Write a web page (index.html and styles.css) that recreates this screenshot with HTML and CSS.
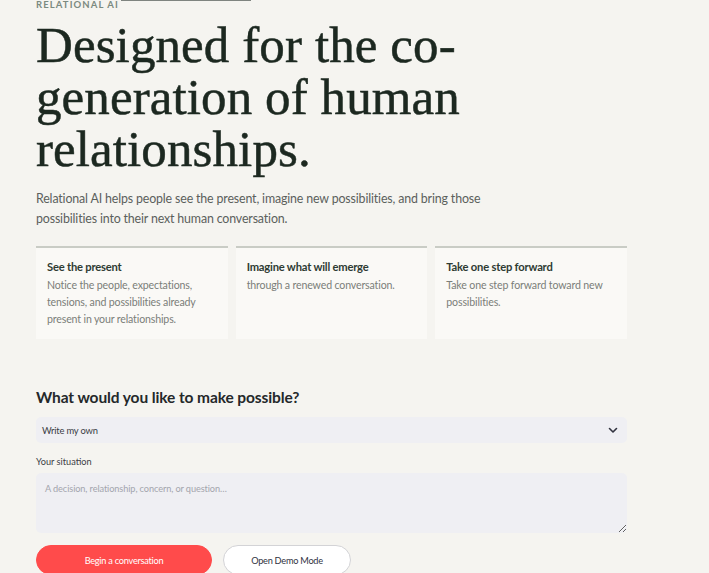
FILE: index.html
```html
<!DOCTYPE html>
<html lang="en">
<head>
<meta charset="utf-8">
<title>Relational AI</title>
<link rel="stylesheet" href="styles.css">
</head>
<body>
<main class="page">
  <div class="eyebrow"><span class="eyebrow-text">RELATIONAL AI</span><span class="eyebrow-rule"></span></div>
  <h1 class="hero-title">Designed for the co-generation of human relationships.</h1>
  <p class="hero-lead">Relational AI helps people see the present, imagine new possibilities, and bring those possibilities into their next human conversation.</p>

  <section class="cards">
    <article class="card">
      <h3 class="card-title">See the present</h3>
      <p class="card-text">Notice the people, expectations, tensions, and possibilities already present in your relationships.</p>
    </article>
    <article class="card">
      <h3 class="card-title">Imagine what will emerge</h3>
      <p class="card-text">through a renewed conversation.</p>
    </article>
    <article class="card">
      <h3 class="card-title">Take one step forward</h3>
      <p class="card-text">Take one step forward toward new possibilities.</p>
    </article>
  </section>

  <h2 class="section-title">What would you like to make possible?</h2>
  <div class="select">
    <span class="select-value">Write my own</span>
    <svg class="chevron" width="10" height="7" viewBox="0 0 10 7"><path d="M1.5 1.5 L5 5 L8.5 1.5" fill="none" stroke="#31333f" stroke-width="1.6" stroke-linecap="round" stroke-linejoin="round"/></svg>
  </div>
  <label class="field-label" for="situation">Your situation</label>
  <textarea id="situation" class="textarea" placeholder="A decision, relationship, concern, or question…"></textarea>
  <div class="actions">
    <button class="btn btn-primary">Begin a conversation</button>
    <button class="btn btn-secondary">Open Demo Mode</button>
  </div>
</main>
</body>
</html>
```
FILE: styles.css
```css
* { box-sizing: border-box; }
html, body { margin: 0; padding: 0; }
body {
  background: #f5f4f0;
  font-family: "Lato", "Liberation Sans", sans-serif;
  color: #31333f;
  overflow: hidden;
}
.page {
  width: 627px;
  padding: 0 0 0 36px;
}
.eyebrow {
  display: flex;
  align-items: flex-start;
  gap: 2px;
  margin-top: -1px;
  height: 12px;
}
.eyebrow-text {
  font-size: 9.5px;
  line-height: 12px;
  font-weight: 700;
  letter-spacing: 1.1px;
  color: #7b8a80;
}
.eyebrow-rule {
  width: 130px;
  height: 1px;
  margin-top: 1px;
  background: #7f8480;
}
.hero-title {
  font-family: "Liberation Serif", "Times New Roman", serif;
  font-weight: 400;
  font-size: 51px;
  line-height: 52px;
  color: #1c2820;
  -webkit-text-stroke: 0.5px #1c2820;
  margin: 8px 0 0;
  max-width: 470px;
  letter-spacing: 0.1px;
}
.hero-lead {
  margin: 14px 0 0;
  font-size: 12.4px;
  line-height: 20px;
  letter-spacing: -0.15px;
  color: #5b605c;
  max-width: 470px;
}
.cards {
  display: grid;
  grid-template-columns: repeat(3, 1fr);
  gap: 8px;
  margin-top: 17px;
}
.card {
  background: #faf9f6;
  border-top: 2px solid #c9ccc5;
  padding: 10px 11px 11px;
}
.card-title {
  margin: 0 0 2px;
  font-size: 11.2px;
  line-height: 17px;
  font-weight: 700;
  letter-spacing: -0.2px;
  color: #2e3b33;
}
.card-text {
  margin: 0;
  font-size: 10.6px;
  line-height: 17px;
  letter-spacing: -0.15px;
  color: #7b7e79;
}
.section-title {
  margin: 45px 0 0;
  font-size: 15.5px;
  line-height: 26px;
  font-weight: 700;
  letter-spacing: -0.1px;
  color: #24282a;
}
.select {
  margin-top: 7px;
  height: 26px;
  background: #efeff3;
  border-radius: 5px;
  display: flex;
  align-items: center;
  justify-content: space-between;
  padding: 0 9px 0 6px;
}
.select-value {
  font-size: 9.4px;
  letter-spacing: -0.2px;
  color: #3b3d45;
}
.chevron { display: block; }
.field-label {
  display: block;
  margin-top: 12px;
  font-size: 9.2px;
  line-height: 14px;
  color: #3b3d45;
}
.textarea {
  display: block;
  width: 100%;
  height: 60px;
  margin-top: 4px;
  border: none;
  border-radius: 5px;
  background: #efeff3;
  padding: 9px 9px;
  font-family: "Lato", "Liberation Sans", sans-serif;
  font-size: 9.2px;
  line-height: 14px;
  letter-spacing: -0.1px;
  color: #31333f;
  resize: vertical;
  outline: none;
}
.textarea::placeholder { color: #a3a5ad; }
.actions {
  display: flex;
  gap: 11px;
  margin-top: 12px;
}
.btn {
  height: 30px;
  border-radius: 15px;
  font-family: "Lato", "Liberation Sans", sans-serif;
  font-size: 9.2px;
  letter-spacing: -0.25px;
  cursor: pointer;
  padding: 0;
}
.btn-primary {
  width: 176px;
  background: #ff4b4b;
  border: 1px solid #ff4b4b;
  color: #ffffff;
}
.btn-secondary {
  width: 128px;
  background: #ffffff;
  border: 1px solid #d3d3d6;
  color: #31333f;
}
```
